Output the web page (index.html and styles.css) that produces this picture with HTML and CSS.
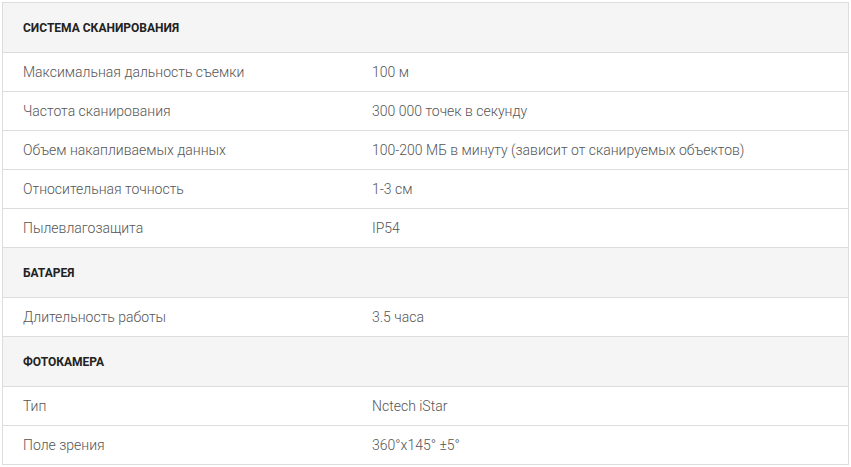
FILE: index.html
```html
<!DOCTYPE html>
<html lang="ru">
<head>
<meta charset="utf-8">
<link rel="stylesheet" href="styles.css">
</head>
<body>
<div class="specs">
  <div class="group">Система сканирования</div>
  <div class="row"><div class="name">Максимальная дальность съемки</div><div class="value">100 м</div></div>
  <div class="row"><div class="name">Частота сканирования</div><div class="value">300 000 точек в секунду</div></div>
  <div class="row"><div class="name">Объем накапливаемых данных</div><div class="value">100-200 МБ в минуту (зависит от сканируемых объектов)</div></div>
  <div class="row"><div class="name">Относительная точность</div><div class="value">1-3 см</div></div>
  <div class="row"><div class="name">Пылевлагозащита</div><div class="value">IP54</div></div>
  <div class="group">Батарея</div>
  <div class="row"><div class="name">Длительность работы</div><div class="value">3.5 часа</div></div>
  <div class="group">Фотокамера</div>
  <div class="row"><div class="name">Тип</div><div class="value">Nctech iStar</div></div>
  <div class="row"><div class="name">Поле зрения</div><div class="value">360°x145° ±5°</div></div>
</div>
</body>
</html>
```
FILE: styles.css
```css
html, body { margin: 0; padding: 0; background: #fff; }
body { padding: 2px 0 0 2px; font-family: Roboto, "Liberation Sans", sans-serif; }
.specs {
  width: 845px;
  border: 1px solid #dddddd;
  border-bottom: none;
}
.group {
  box-sizing: border-box;
  height: 50px;
  display: flex;
  align-items: center;
  padding-left: 20px;
  background: #f5f5f5;
  border-bottom: 1px solid #dddddd;
  font-size: 12px;
  font-weight: 700;
  text-transform: uppercase;
  color: #222222;
}
.row {
  box-sizing: border-box;
  height: 39px;
  padding-bottom: 1px;
  display: grid;
  grid-template-columns: 349px 1fr;
  align-items: center;
  border-bottom: 1px solid #dddddd;
  font-size: 14px;
  font-weight: 300;
  color: #555555;
}
.name, .value { padding-left: 20px; }
```
